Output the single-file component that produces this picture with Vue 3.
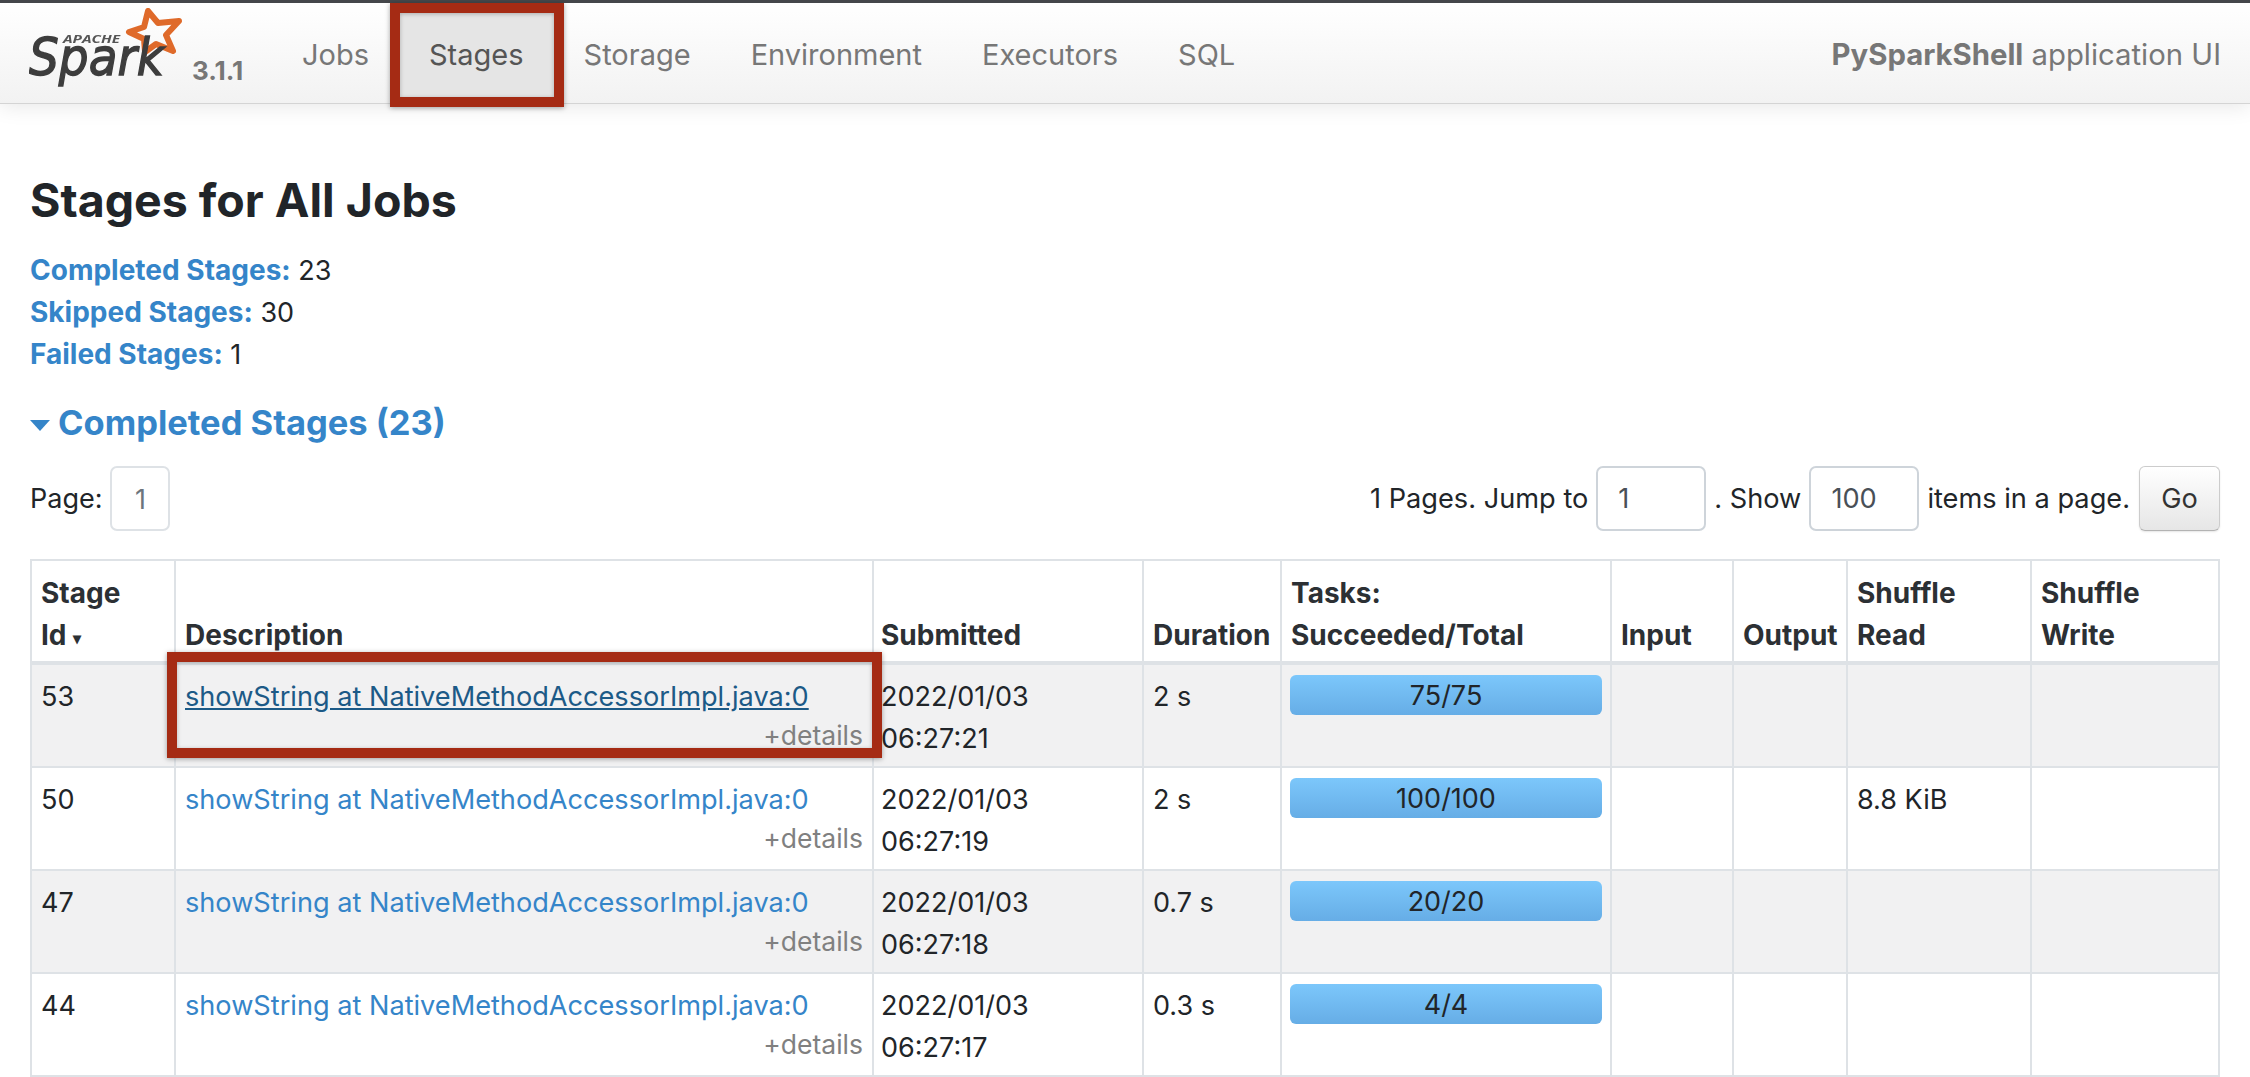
<template>
  <div class="page">
    <nav class="navbar">
      <a class="brand">
        <svg class="logo" width="160" height="84" viewBox="0 0 160 84">
          <polygon class="logo-star" points="119,5 129,17 150,15 137,29 144,45 127,38 116,46 115,33 100,26 115,21" />
          <text class="logo-apache" x="34" y="37" textLength="57" lengthAdjust="spacingAndGlyphs">APACHE</text>
          <text class="logo-word" x="0" y="69" textLength="135" lengthAdjust="spacingAndGlyphs">Spark</text>
        </svg>
        <span class="version">3.1.1</span>
      </a>
      <ul class="nav-links">
        <li v-for="item in navItems" :key="item" class="nav-item" :class="{ active: item === 'Stages' }">
          {{ item }}
          <span v-if="item === 'Stages'" class="callout nav-callout"></span>
        </li>
      </ul>
      <p class="app-name"><strong>PySparkShell</strong> application UI</p>
    </nav>

    <main class="content">
      <h3 class="title">Stages for All Jobs</h3>
      <ul class="summary">
        <li v-for="line in summary" :key="line.label"><a>{{ line.label }}:</a> {{ line.value }}</li>
      </ul>

      <h4 class="section-title"><span class="caret"></span>Completed Stages (23)</h4>

      <div class="pager">
        <div class="pager-left">
          <span>Page:</span>
          <span class="page-box">1</span>
        </div>
        <div class="pager-right">
          <span>1 Pages. Jump to</span>
          <span class="num-input">1</span>
          <span>. Show</span>
          <span class="num-input">100</span>
          <span>items in a page.</span>
          <button class="go">Go</button>
        </div>
      </div>

      <table class="stages">
        <colgroup>
          <col v-for="w in colWidths" :key="w.id" :style="{ width: w.px + 'px' }" />
        </colgroup>
        <thead>
          <tr>
            <th>Stage<br />Id <span class="sort">▾</span></th>
            <th>Description</th>
            <th>Submitted</th>
            <th>Duration</th>
            <th>Tasks:<br />Succeeded/Total</th>
            <th>Input</th>
            <th>Output</th>
            <th>Shuffle<br />Read</th>
            <th>Shuffle<br />Write</th>
          </tr>
        </thead>
        <tbody>
          <tr v-for="(row, i) in rows" :key="row.id">
            <td>{{ row.id }}</td>
            <td class="desc">
              <a class="desc-link" :class="{ hovered: i === 0 }">showString at NativeMethodAccessorImpl.java:0</a>
              <div class="details">+details</div>
              <span v-if="i === 0" class="callout desc-callout"></span>
            </td>
            <td>2022/01/03<br />{{ row.time }}</td>
            <td>{{ row.duration }}</td>
            <td><div class="progress">{{ row.tasks }}</div></td>
            <td></td>
            <td></td>
            <td>{{ row.read }}</td>
            <td></td>
          </tr>
        </tbody>
      </table>
    </main>
  </div>
</template>

<script setup>
const navItems = ['Jobs', 'Stages', 'Storage', 'Environment', 'Executors', 'SQL']

const summary = [
  { label: 'Completed Stages', value: 23 },
  { label: 'Skipped Stages', value: 30 },
  { label: 'Failed Stages', value: 1 }
]

const colWidths = [144, 698, 270, 138, 330, 122, 114, 184, 188].map((px, id) => ({ id, px }))

const rows = [
  { id: 53, time: '06:27:21', duration: '2 s', tasks: '75/75', read: '' },
  { id: 50, time: '06:27:19', duration: '2 s', tasks: '100/100', read: '8.8 KiB' },
  { id: 47, time: '06:27:18', duration: '0.7 s', tasks: '20/20', read: '' },
  { id: 44, time: '06:27:17', duration: '0.3 s', tasks: '4/4', read: '' }
]
</script>

<style>
html,
body {
  margin: 0;
  overflow: hidden;
  background: #fff;
}
</style>

<style scoped>
.page {
  font-family: Inter, "Liberation Sans", sans-serif;
  font-size: 27px;
  line-height: 42px;
  color: #212529;
  width: 2250px;
  height: 1077px;
  overflow: hidden;
}

.navbar {
  display: flex;
  align-items: stretch;
  height: 100px;
  border-top: 3px solid #45474b;
  border-bottom: 1px solid #d4d4d4;
  background: linear-gradient(to bottom, #ffffff, #f2f2f2);
  box-shadow: 0 2px 20px rgba(0, 0, 0, 0.1);
  padding: 0 29px 0 29px;
  color: #777;
}

.brand {
  display: flex;
  align-items: flex-start;
  width: 243px;
  flex: none;
}

.logo {
  flex: none;
  margin-top: 3px;
  filter: blur(0.6px);
}

.logo-star {
  fill: none;
  stroke: #df6a2a;
  stroke-width: 6;
  stroke-linejoin: round;
}

.logo-apache {
  font-family: "Open Sans", sans-serif;
  font-size: 11px;
  font-weight: 700;
  font-style: italic;
  fill: #555;
}

.logo-word {
  font-family: "DejaVu Sans", sans-serif;
  font-size: 52px;
  font-style: italic;
  fill: #3d3d3d;
  stroke: #3d3d3d;
  stroke-width: 1.4;
}

.version {
  font-size: 26px;
  font-weight: 700;
  margin: 47px 0 0 3px;
  line-height: 42px;
}

.nav-links {
  display: flex;
  align-items: stretch;
  list-style: none;
  margin: 0;
  padding: 0;
}

.nav-item {
  display: flex;
  align-items: center;
  padding: 3px 30px 0;
  font-size: 29px;
  position: relative;
  color: #777;
}

.nav-item.active {
  background: #e5e5e5;
  color: #555;
}

.app-name {
  margin: 0 0 0 auto;
  padding-top: 3px;
  align-self: center;
  font-size: 29.3px;
}

.callout {
  position: absolute;
  box-sizing: border-box;
  border: 10px solid #a52b14;
  box-shadow: 0 1px 5px rgba(0, 0, 0, 0.35), inset 0 1px 4px rgba(0, 0, 0, 0.25);
  pointer-events: none;
}

.nav-callout {
  left: -9px;
  right: -10px;
  top: 0;
  bottom: -4px;
}

.desc-callout {
  left: -9px;
  width: 715px;
  top: -13px;
  height: 106px;
}

.content {
  padding: 0 30px;
}

.title {
  font-size: 46.5px;
  font-weight: 700;
  line-height: 52px;
  margin: 70px 0 24px;
}

.summary {
  list-style: none;
  margin: 0;
  padding: 0;
}

.summary li {
  height: 42px;
}

.summary a {
  color: #3585c9;
  font-weight: 700;
  font-size: 28px;
  line-height: 1;
}

.section-title {
  display: flex;
  align-items: center;
  font-size: 34.5px;
  font-weight: 700;
  line-height: 42px;
  color: #3585c9;
  margin: 26px 0 0;
}

.caret {
  width: 0;
  height: 0;
  border-left: 10px solid transparent;
  border-right: 10px solid transparent;
  border-top: 11px solid #3585c9;
  margin: 4px 8px 0 0;
}

.pager {
  display: flex;
  justify-content: space-between;
  margin-top: 22px;
}

.pager-left,
.pager-right {
  display: flex;
  align-items: center;
}

.pager-left {
  gap: 8px;
}

.pager-right {
  gap: 8px;
  font-size: 27.2px;
}

.page-box {
  box-sizing: border-box;
  width: 60px;
  height: 65px;
  border: 2px solid #dee2e6;
  border-radius: 7px;
  color: #6c757d;
  text-align: center;
  line-height: 64px;
}

.num-input {
  box-sizing: border-box;
  width: 110px;
  height: 65px;
  border: 2px solid #ced4da;
  border-radius: 7px;
  padding-left: 20px;
  color: #495057;
  line-height: 62px;
}

.go {
  box-sizing: border-box;
  width: 81px;
  height: 65px;
  border: 1px solid #ccc;
  border-bottom-color: #b3b3b3;
  border-radius: 6px;
  background: linear-gradient(to bottom, #ffffff, #e6e6e6);
  box-shadow: 0 1px 2px rgba(0, 0, 0, 0.1);
  color: #333;
  font: inherit;
  margin-left: 1px;
}

.stages {
  border-collapse: collapse;
  table-layout: fixed;
  width: 2188px;
  margin: 28px 0 0;
}

.stages th,
.stages td {
  border: 2px solid #dee2e6;
  padding: 11px 9px 6px;
  text-align: left;
  vertical-align: top;
  box-sizing: border-box;
}

.stages th {
  vertical-align: bottom;
  font-weight: 700;
  font-size: 28px;
  color: #2c3034;
  border-bottom-width: 4px;
  padding: 11px 9px 5px;
}

.stages th:nth-child(3),
.stages td:nth-child(3) {
  padding-left: 7px;
}

.stages tbody tr:nth-child(odd) {
  background: #f1f1f2;
}

.sort {
  font-size: 16px;
  line-height: 1;
  vertical-align: 1px;
}

.desc {
  position: relative;
}

.desc-link {
  color: #3585c9;
  display: block;
  font-size: 27.15px;
}

.desc-link.hovered {
  color: #1c5a87;
  text-decoration: underline;
}

.details {
  text-align: right;
  color: #808080;
  font-size: 26.5px;
  line-height: 36px;
  margin-top: -1px;
}

.progress {
  height: 40px;
  margin: -1px -1px 0;
  border-radius: 6px;
  background: linear-gradient(to bottom, #7cc7fb, #66ade6);
  text-align: center;
  line-height: 42px;
  color: #212529;
}
</style>
